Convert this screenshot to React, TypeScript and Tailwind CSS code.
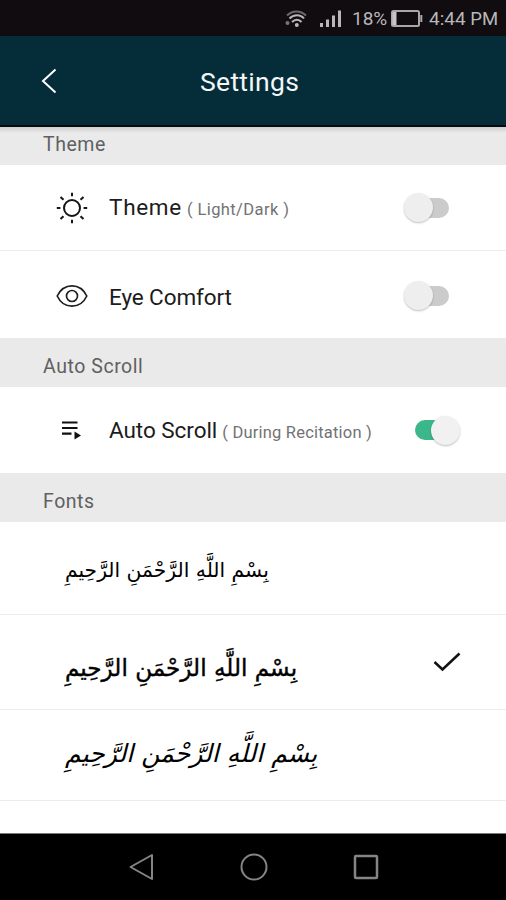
import React, { useState } from 'react';

const BISMILLAH = 'بِسْمِ اللَّهِ الرَّحْمَنِ الرَّحِيمِ';

const arabicFonts = [
    { id: 'regular', row: 'h-[93px] pt-1', text: 'text-[20.3px]' },
    { id: 'bold', row: 'h-[95px] pt-3', text: 'text-[23.1px] [-webkit-text-stroke:0.4px_#000]' },
    { id: 'slanted', row: 'h-[91px] pb-0.5', text: 'text-[25.1px] italic' },
];

function SunIcon() {
    return (
        <svg width="32" height="32" viewBox="0 0 32 32" fill="none" stroke="#151515" strokeWidth="2" className="shrink-0">
            <circle cx="16" cy="16" r="8" />
            <path d="M16 .8v3.400M16 27.800v3.400M.8 16h3.600M27.600 16h3.600M4.500 5l3 2.800M27.500 5l-3 2.800M4.500 27l3-2.800M27.500 27l-3-2.800" />
        </svg>
    );
}

function EyeIcon() {
    return (
        <svg width="32" height="32" viewBox="0 0 32 32" fill="none" stroke="#202020" strokeWidth="1.7" className="shrink-0">
            <path d="M1.200 16C4.500 9 10 5.800 16 5.800S27.500 9 30.800 16C27.500 23 22 26.200 16 26.200S4.500 23 1.200 16z" />
            <circle cx="16" cy="16" r="5.500" />
        </svg>
    );
}

function ScrollIcon() {
    return (
        <svg width="32" height="32" viewBox="0 0 32 32" fill="none" className="shrink-0">
            <path d="M6 8.500h15.500M6 14h15.500M6 19.600h9.500" stroke="#111" strokeWidth="2.200" />
            <path d="M18.500 17.500v8l6.500-4z" fill="#111" />
        </svg>
    );
}

function Toggle({ on, onClick }: { on: boolean; onClick: () => void }) {
    return (
        <button onClick={onClick} role="switch" aria-checked={on} className={`flex h-[30px] items-center ${on ? 'mr-[46px]' : 'mr-[57px]'}`}>
            {on ? (
                <>
                    <span className="h-5 w-[31px] rounded-full bg-[#3bb78b]" />
                    <span className="-ml-[15px] h-[29px] w-[29px] rounded-full bg-[#f1f1f1] shadow-[0_1px_2px_rgba(0,0,0,0.25)]" />
                </>
            ) : (
                <>
                    <span className="z-10 h-[29px] w-[29px] rounded-full bg-[#eeeeee] shadow-[0_1px_2px_rgba(0,0,0,0.25)]" />
                    <span className="-ml-[15px] h-5 w-[31px] rounded-full bg-[#cbcbcb]" />
                </>
            )}
        </button>
    );
}

function SectionTitle({ label, className }: { label: string; className: string }) {
    return (
        <div className={`shrink-0 bg-[#eaeaea] pl-[43px] text-[19.5px] leading-6 tracking-[0.55px] text-[#606060] ${className}`}>{label}</div>
    );
}

function SettingRow({ icon, label, hint, on, onToggle, className, spacing, hintSpacing }: any) {
    return (
        <div className={`flex shrink-0 items-center bg-white pl-14 ${className}`}>
            {icon}
            <div className={`ml-[21px] flex flex-1 items-baseline pt-0.5 text-[22.5px] leading-7 whitespace-nowrap text-[#1c1c1c] ${spacing}`}>
                {label}
                {hint && <span className={`ml-[5px] text-[16.5px] text-[#727272] ${hintSpacing}`}>{hint}</span>}
            </div>
            <Toggle on={on} onClick={onToggle} />
        </div>
    );
}

export default function App() {
    const [dark, setDark] = useState(false);
    const [comfort, setComfort] = useState(false);
    const [autoScroll, setAutoScroll] = useState(true);
    const [font, setFont] = useState('bold');

    return (
        <div className="flex h-[900px] w-[506px] flex-col overflow-hidden bg-white font-['Roboto',sans-serif]">
            {/* Status bar */}
            <div className="flex h-9 shrink-0 items-center bg-[#100c10] pt-0.5 pl-[283px] text-[19px] text-[#b9b7b8]">
                <svg width="27" height="20" viewBox="0 0 27 20" fill="none" stroke="#b9b7b8" strokeWidth="2">
                    <path d="M4 6.500C9.500 1 17.500 1 23 6.500" stroke="#6c696b" />
                    <path d="M6.500 9.500C10.500 5 17.500 5 21 9.500M9 13c3-3 7-3 9.500 0" />
                    <circle cx="13.800" cy="16" r="2" fill="#b9b7b8" stroke="none" />
                    <circle cx="4.500" cy="14" r="2" fill="#777476" stroke="none" />
                </svg>
                <svg width="22" height="20" viewBox="0 0 22 20" fill="#b9b7b8" className="ml-[10px]">
                    <path d="M0 14h3v4H0zM6 10.500h3V18H6zM12 6.500h3V18h-3zM18 1.500h3V18h-3z" />
                </svg>
                <span className="ml-[10px] w-[38px] whitespace-nowrap">18%</span>
                <svg width="33" height="20" viewBox="0 0 33 20" fill="none" stroke="#aaa7a8" strokeWidth="2" className="shrink-0">
                    <rect x="2" y="2" width="27" height="15" rx="1.500" />
                    <path d="M4.500 3v13" stroke="#c7c5c6" strokeWidth="4" />
                    <path d="M31.300 6v7" />
                </svg>
                <span className="ml-1.5 whitespace-nowrap">4:44 <span className="text-[18.5px]">PM</span></span>
            </div>

            {/* Header */}
            <div className="flex h-[91px] shrink-0 items-center border-b-2 border-[#050a0c] bg-[#042d39] pt-px">
                <svg width="16" height="26" viewBox="0 0 16 26" fill="none" stroke="#fff" strokeWidth="2" className="ml-[41px]">
                    <path d="M14.500 1.500L2 13l12.500 11.500" />
                </svg>
                <h1 className="ml-[143px] pt-0.5 text-[26.5px] tracking-[0.3px] text-[#f4f7f8]">Settings</h1>
            </div>

            <SectionTitle label="Theme" className="h-[38px] bg-linear-to-b from-[#cfcfcf] to-[#eaeaea] to-[6px] pt-1.5" />
            <SettingRow
                icon={<SunIcon />}
                label="Theme"
                hint="( Light/Dark )"
                on={dark}
                onToggle={() => setDark(!dark)}
                spacing="tracking-[0.7px]"
                hintSpacing="tracking-[0.4px]"
                className="h-[86px] border-b border-[#ececec]"
            />
            <SettingRow icon={<EyeIcon />} label="Eye Comfort" on={comfort} onToggle={() => setComfort(!comfort)} spacing="tracking-[-0.1px]" className="h-[87px] pt-0.5" />

            <SectionTitle label="Auto Scroll" className="h-[49px] pt-[17px]" />
            <SettingRow
                icon={<ScrollIcon />}
                label="Auto Scroll"
                hint="( During Recitation )"
                on={autoScroll}
                onToggle={() => setAutoScroll(!autoScroll)}
                spacing="tracking-[-0.05px]"
                hintSpacing="tracking-[0.2px]"
                className="h-[86px]"
            />

            <SectionTitle label="Fonts" className="h-[49px] pt-[17px]" />
            {arabicFonts.map((f) => (
                <button key={f.id} onClick={() => setFont(f.id)} className={`flex shrink-0 items-center border-b border-[#ececec] bg-white pl-[65px] ${f.row}`}>
                    <span dir="rtl" lang="ar" className={`whitespace-nowrap font-['DejaVu_Sans',sans-serif] text-black ${f.text}`}>{BISMILLAH}</span>
                    {font === f.id && (
                        <svg width="28" height="22" viewBox="0 0 28 22" fill="none" stroke="#111" strokeWidth="2.500" className="mb-3 ml-auto mr-[45px]">
                            <path d="M1.500 11l8 7.500L26.500 2.500" />
                        </svg>
                    )}
                </button>
            ))}
            <div className="h-8 shrink-0 bg-white" />

            {/* Navigation keys */}
            <div className="flex h-[67px] shrink-0 items-center border-t border-[#777] bg-black pl-[128px]">
                <svg width="26" height="28" viewBox="0 0 26 28" fill="none" stroke="#858585" strokeWidth="2" strokeLinejoin="round">
                    <path d="M24 2v24L2.500 14z" />
                </svg>
                <svg width="28" height="28" viewBox="0 0 28 28" fill="none" stroke="#858585" strokeWidth="2" className="ml-[86px]">
                    <circle cx="14" cy="14" r="12.500" />
                </svg>
                <svg width="26" height="26" viewBox="0 0 26 26" fill="none" stroke="#858585" strokeWidth="2.500" className="ml-[85px]">
                    <rect x="2" y="2" width="22" height="22" rx="1" />
                </svg>
            </div>
        </div>
    );
}
